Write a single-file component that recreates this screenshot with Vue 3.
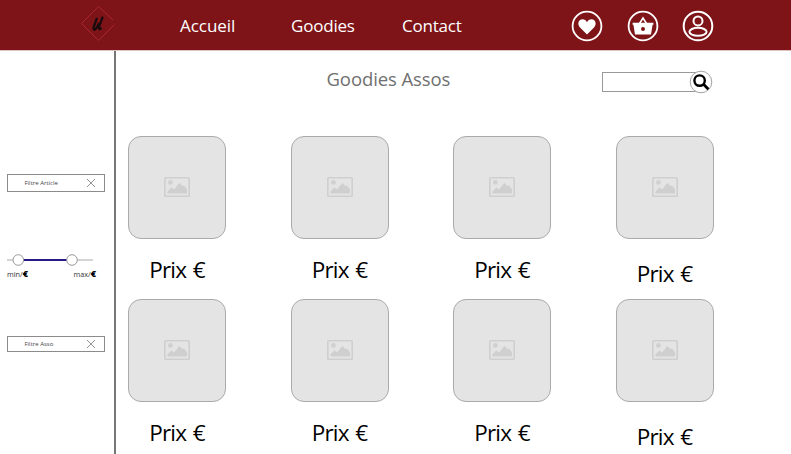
<script setup>
const navigation = [
  { label: 'Accueil', name: 'accueil' },
  { label: 'Goodies', name: 'goodies' },
  { label: 'Contact', name: 'contact' },
]
const products = Array.from({ length: 8 }, (_, i) => i + 1)
</script>

<template>
  <div class="page">
    <header class="topbar">
      <svg class="logo" viewBox="0 0 38 38">
        <path d="M34 15 19.5 1.5 2.5 18.5l17 17 16-16" fill="none" stroke="#a9262d" stroke-width="1" />
        <path d="M18 13 15 21.2c-1 3-.2 4.2 1.2 3.2 1.7-1.4 3-4 4-6.4" fill="none" stroke="#170b0d" stroke-width="2.2" />
        <path d="m23.8 11.6-3.7 9.8c-.8 3 .3 3.5 2.5 1.5" fill="none" stroke="#170b0d" stroke-width="2.2" />
      </svg>
      <nav class="nav">
        <a v-for="item in navigation" :key="item.name" :class="item.name">{{ item.label }}</a>
      </nav>
      <div class="actions">
        <svg viewBox="0 0 32 32">
          <circle cx="16" cy="16" r="14.4" fill="none" stroke="#fff" stroke-width="1.8" />
          <path d="M16 24.6 9 17.5C5.6 13.6 8 9.3 11.4 9.3c2.1 0 3.7 1.2 4.6 3 .9-1.8 2.5-3 4.6-3 3.4 0 5.8 4.3 2.4 8.2Z" fill="#fff" />
        </svg>
        <svg viewBox="0 0 32 32">
          <circle cx="16" cy="16" r="14.4" fill="none" stroke="#fff" stroke-width="1.8" />
          <path d="m12.2 14 3.8-6 3.8 6" fill="none" stroke="#fff" stroke-width="1.6" />
          <path fill-rule="evenodd" d="M5.6 12.8h20.8v2h-.8L24 24.4H8L6.4 14.8h-.8ZM16 16.9a2 2 0 1 0 0 4 2 2 0 0 0 0-4Z" fill="#fff" />
        </svg>
        <svg viewBox="0 0 32 32" fill="none" stroke="#fff">
          <circle cx="16" cy="16" r="14.3" stroke-width="2" />
          <circle cx="16" cy="10.9" r="4.5" stroke-width="2" />
          <ellipse cx="16" cy="21.8" rx="8.6" ry="4" stroke-width="2" />
        </svg>
      </div>
    </header>

    <div class="body">
      <aside class="sidebar">
        <div class="filter">
          <span>Filtre Article</span>
          <svg viewBox="0 0 10 10"><path d="m1 1 8 8M9 1 1 9" /></svg>
        </div>
        <div class="price-range">
          <svg class="slider" viewBox="0 0 98 14">
            <path d="M0 7h86" stroke="#aaa" />
            <path d="M11 7h54" stroke="#241b86" stroke-width="2" />
            <circle cx="11.3" cy="7" r="5.3" />
            <circle cx="65" cy="7" r="5.3" />
          </svg>
          <div class="bounds"><span>min/<b>€</b></span><span>max/<b>€</b></span></div>
        </div>
        <div class="filter asso">
          <span>Filtre Asso</span>
          <svg viewBox="0 0 10 10"><path d="m1 1 8 8M9 1 1 9" /></svg>
        </div>
      </aside>

      <main class="catalog">
        <div class="heading">
          <h1>Goodies Assos</h1>
          <div class="search">
            <input type="text" aria-label="Rechercher">
            <svg viewBox="0 0 24 24">
              <circle cx="12" cy="12" r="10.8" fill="#fff" stroke="#999" stroke-width=".9" />
              <circle cx="10.6" cy="10.6" r="5.2" fill="none" stroke="#000" stroke-width="2.4" />
              <path d="m14.5 14.3 4.9 4.9" stroke="#000" stroke-width="2.8" />
            </svg>
          </div>
        </div>
        <section class="products">
          <article v-for="product in products" :key="product" class="product">
            <div class="picture">
              <svg viewBox="0 0 26 20">
                <rect x=".8" y=".8" width="24.4" height="18.4" rx=".8" fill="none" stroke="#cfcfcf" stroke-width="1.6" />
                <circle cx="6.4" cy="5.4" r="2.4" fill="#d0d0d0" />
                <path d="M3.4 16.6v-2.1l4-3.9 2.7 1.8 5.4-6.6 2.9 3.5 1.4-1 3.2 4v4.3Z" fill="#cfcfcf" />
              </svg>
            </div>
            <p>Prix €</p>
          </article>
        </section>
      </main>
    </div>
  </div>
</template>

<style>
body { margin: 0; background: #fff; overflow: hidden; }
</style>

<style scoped>
* { box-sizing: border-box; }
.page { width: 791px; height: 454px; overflow: hidden; display: flex; flex-direction: column; font-family: "Open Sans", "Noto Sans", sans-serif; color: #000; }
.topbar { flex: 0 0 51px; display: flex; align-items: flex-start; background: #7e1418; border-bottom: 1px solid #dfc0c1; color: #fff; }
.logo { width: 38px; height: 38px; margin: 5px 0 0 79px; flex: none; }
.nav { display: grid; grid-template-columns: 111px 111px 168.5px; margin-left: 63px; padding-top: 14px; font-size: 17px; line-height: 24px; white-space: nowrap; }
.accueil { letter-spacing: -.05px; }
.goodies { letter-spacing: -.2px; }
.contact { letter-spacing: -.2px; }
.actions { display: flex; gap: 24px; padding-top: 9.5px; }
.actions svg { width: 32px; height: 32px; display: block; }
.actions svg:last-child { margin-left: -1px; }
.body { display: flex; flex: 1; min-height: 0; }
.sidebar { flex: 0 0 116px; border-right: 2px solid #777; padding: 123px 0 0 7px; }
.filter { width: 98px; height: 18px; border: 1px solid #8b8b8b; display: flex; align-items: center; justify-content: space-between; padding: 0 8px 0 16.5px; font-size: 6px; line-height: 10px; color: #444; }
.filter svg { width: 10px; height: 10px; stroke: #777; stroke-width: .8; fill: none; }
.price-range { margin-top: 61px; height: 83px; }
.slider { display: block; width: 98px; height: 14px; }
.slider circle { fill: #fff; stroke: #999; stroke-width: 1; }
.bounds { display: flex; justify-content: space-between; width: 89px; margin-top: 2px; font-size: 7.3px; line-height: 10px; color: #333; }
.bounds b { font-size: 9px; font-weight: 800; color: #000; }
.asso { height: 16px; }
.catalog { flex: 1; min-width: 0; }
.heading { height: 85px; display: flex; align-items: flex-start; }
h1 { width: 276px; margin: 15px 0 0 210.5px; font-size: 18.5px; font-weight: 400; line-height: 26px; letter-spacing: -.1px; color: #707070; white-space: nowrap; }
.search { display: flex; align-items: center; margin: 19px 0 0 -.5px; }
.search input { width: 98px; height: 20px; border: 1px solid #999; border-radius: 0; padding: 2px 5px; background: #fff; outline: 0; }
.search svg { width: 24px; height: 24px; margin-left: -11px; position: relative; }
.products { display: grid; grid-template-columns: repeat(4, 98px); grid-auto-rows: 163px; column-gap: 64.5px; padding-left: 12px; }
.picture { width: 98px; height: 102.5px; border: 1px solid #aaa; border-radius: 13px; display: flex; align-items: center; justify-content: center; background: #e4e4e4; }
.picture svg { width: 26px; height: 20px; }
.product p { margin: 16px 0 0; text-align: center; font-size: 22.5px; line-height: 30px; letter-spacing: -.8px; word-spacing: 1.5px; }
.product:nth-child(4n) p { margin-top: 20px; }
</style>
